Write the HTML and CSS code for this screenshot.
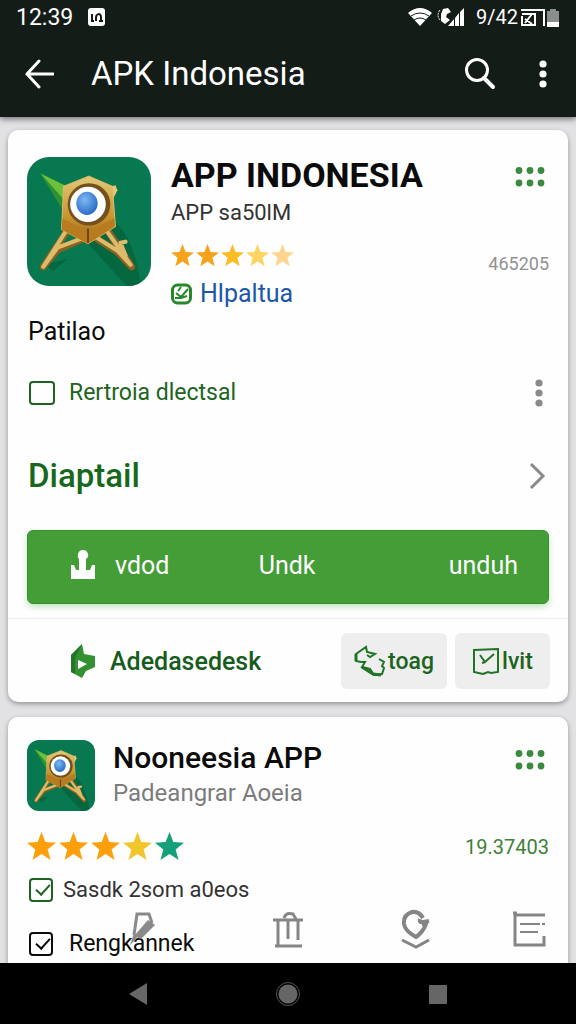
FILE: index.html
```html
<!DOCTYPE html>
<html lang="id">
<head>
<meta charset="utf-8">
<meta name="viewport" content="width=device-width, initial-scale=1">
<title>APK Indonesia</title>
<link rel="stylesheet" href="styles.css">
</head>

<body>
<!-- shared shapes -->
<svg class="defs" aria-hidden="true">
	<defs>
		<linearGradient id="gold" x1="0" y1="0" x2="0" y2="1">
			<stop offset="0" stop-color="#e3c878"/>
			<stop offset="0.6" stop-color="#c8952f"/>
			<stop offset="1" stop-color="#9a641a"/>
		</linearGradient>
		<radialGradient id="lens" cx="0.4" cy="0.35" r="0.7">
			<stop offset="0" stop-color="#7fb9f2"/>
			<stop offset="1" stop-color="#2467c4"/>
		</radialGradient>
	</defs>
	<symbol id="star" viewBox="0 0 24 24"><path d="M12 0l3.2 8.3 8.8.5-6.9 5.6 2.4 8.8L12 18.300l-7.500 4.900 2.400-8.800L0 8.800l8.800-.5z"/></symbol>
	<symbol id="dots" viewBox="0 0 30 20"><circle cx="4" cy="3.500" r="3.400"/><circle cx="15" cy="3.500" r="3.400"/><circle cx="26" cy="3.500" r="3.400"/><circle cx="4" cy="16" r="3.400"/><circle cx="15" cy="16" r="3.400"/><circle cx="26" cy="16" r="3.400"/></symbol>
	<symbol id="more" viewBox="0 0 8 28"><circle cx="4" cy="4" r="3.600"/><circle cx="4" cy="14" r="3.600"/><circle cx="4" cy="24" r="3.600"/></symbol>
	<symbol id="logo" viewBox="0 0 122 128" preserveAspectRatio="none">
		<rect width="122" height="128" fill="#07784f"/>
		<path d="M84 62q22 18 28 66H98L60 86z" fill="#04673f"/>
		<path d="M18 107l22-6-14 12z" fill="#04673f"/>
		<path d="M13 16l28 14-5 14z" fill="#6cc03c"/>
		<path d="M13 16l23 26v12z" fill="#2e9134"/>
		<path d="M39 74l-23 35 14-17 28-12M80 74l23 35-14-15-22-14" fill="none" stroke="#8c6220" stroke-width="7" stroke-linejoin="round"/>
		<path d="M38 74l-22 35 14-19 26-10M79 74l23 33-13-14-22-14M97 98l-5-13 5-1" fill="none" stroke="#dcbc6c" stroke-width="4" stroke-linejoin="round" stroke-linecap="round"/>
		<path d="M80 30l7-2 2 5-4 8" fill="#e3c878"/>
		<path d="M61 19l23 10 3 40-27 17-26-14 2-43z" fill="url(#gold)" stroke="#dcbc6c" stroke-width="1"/>
		<path d="M35 61l25 13 26-13v8L60 86 34 72z" fill="#b87b20"/>
		<path d="M60 71v14" stroke="#72470f" stroke-width="2"/>
		<circle cx="61" cy="47" r="21" fill="#74501d"/>
		<circle cx="60" cy="47" r="17.500" fill="#fff"/>
		<ellipse cx="59" cy="46" rx="10.500" ry="11.500" fill="url(#lens)"/>
	</symbol>
</svg>

<header class="top">
	<div class="status">
		<span class="clock">12:39</span>
		<svg width="19" height="20" viewBox="0 0 19 20"><rect x="1" y="1" width="17" height="18" rx="3" fill="#fff"/><path d="M5 7v7M9 14v-3c0-5 5-5 5-1v4M4 14h3M12 14h4" fill="none" stroke="#131c17" stroke-width="2"/></svg>
		<span class="fill"></span>
		<svg width="26" height="20" viewBox="0 0 26 20"><path d="M1 6Q13-4 25 6L13 19z" fill="#fff"/><path d="M4 9q9-6 18 0M7 13q6-4 12 0" fill="none" stroke="#131c17"/></svg>
		<svg width="30" height="20" viewBox="0 0 30 20"><path d="M7 2l5-1 3 4-4 2-1 3 4 3-5 4-4-3V7z" fill="#fff"/><path d="M4 3Q0 8 4 13" fill="none" stroke="#fff" stroke-dasharray="2 1"/><path d="M12 19l6-7v7zM19 19v-8l4-5v13zM24 19V5l4-4v18z" fill="#fff"/></svg>
		<span class="level">9/42</span>
		<svg width="40" height="21" viewBox="0 0 40 21"><path d="M1 3h23v16M2 7h13v11H2V9M5 16l7-9M5 12l7 5" fill="none" stroke="#fff" stroke-width="2"/><path d="M27 4h3V2h6v2h3v16H27z" fill="#8b8e8c"/><path d="M27 15h12v5H27z" fill="#fff"/></svg>
	</div>
	<div class="bar">
		<button class="icon" aria-label="Kembali"><svg width="30" height="30" viewBox="0 0 30 30" fill="none" stroke="#fff" stroke-width="3"><path d="M15 2L3 15l12 13M3 15h26" stroke-linecap="round"/></svg></button>
		<h1>APK Indonesia</h1>
		<button class="icon" aria-label="Cari"><svg width="32" height="32" viewBox="0 0 32 32" fill="none" stroke="#fff" stroke-width="3"><circle cx="13" cy="12" r="10.500"/><path d="M20 20l9 9" stroke-width="4" stroke-linecap="round"/></svg></button>
		<button class="icon" aria-label="Menu"><svg width="8" height="28" fill="#fff"><use href="#more"/></svg></button>
	</div>
</header>

<main>
	<section class="card">
		<div class="app">
			<svg class="logo"><use href="#logo"/></svg>
			<div class="info">
				<h2>APP INDONESIA</h2>
				<p class="sub">APP sa50lM</p>
				<div class="stars">
					<svg class="s1"><use href="#star"/></svg>
					<svg class="s1"><use href="#star"/></svg>
					<svg class="s2"><use href="#star"/></svg>
					<svg class="s3"><use href="#star"/></svg>
					<svg class="s4"><use href="#star"/></svg>
				</div>
				<a class="dev" href="#"><svg width="21" height="22" viewBox="0 0 21 22" fill="none" stroke="#28872c"><rect x="1.500" y="2" width="18" height="18" rx="5" stroke-width="3"/><path d="M5 10l5 4 7-8M4 15h6l6-2M10 4L7 8" stroke-width="2"/></svg>Hlpaltua</a>
			</div>
			<div class="side">
				<button class="icon" aria-label="Opsi"><svg class="dots"><use href="#dots"/></svg></button>
				<span class="count">465205</span>
			</div>
		</div>
		<p class="cat">Patilao</p>
		<div class="row">
			<label class="check green"><input type="checkbox">Rertroia dlectsal</label>
			<button class="icon" aria-label="Lainnya"><svg width="8" height="28" fill="#8a8a8a"><use href="#more"/></svg></button>
		</div>
		<a class="row detail" href="#">Diaptail<svg width="18" height="28" viewBox="0 0 18 28" fill="none" stroke="#8a8a8a" stroke-width="3"><path d="M3 2l12 12L3 26"/></svg></a>
		<button class="download">
			<span><svg width="24" height="30" viewBox="0 0 24 30" fill="#fff"><path d="M0 15l3 0 2 5h3V9Q6 7 7 4q1-4 5-4t5 4q1 3-2 5v11h4l2-5h3v14H0z"/></svg>vdod</span>
			<span>Undk</span>
			<span>unduh</span>
		</button>
		<div class="actions">
			<a class="share" href="#"><svg width="26" height="34" viewBox="0 0 26 34"><path d="M1 11L12 0l2 10 11 2v11l-9 4-4 7-11-6z" fill="#34912f"/><path d="M1 11v17l4 2V14l7-14z" fill="#24752a"/><path d="M8 16l9 4-9 5z" fill="#fff"/></svg>Adedasedesk</a>
			<button class="chip"><svg width="32" height="32" viewBox="0 0 32 32" fill="none" stroke="#1f7427" stroke-width="2"><path d="M7 17l-5-1V9l10-7 1 5 8 2-5 3-3-2M7 17h4l-3 5 8 2 4 6 8-1 2-6-2-2 2-4-5-3"/><path d="M2 16V9M8 22l11 7 8 1" stroke-width="3"/></svg>toag</button>
			<button class="chip"><svg width="28" height="27" viewBox="0 0 28 27" fill="none" stroke="#1f7427"><path d="M2 2l24-1v23l-7 1-3-1-5 2-9-2z" stroke-width="2"/><path d="M8 7l5 7 9-8M13 14l-3 1" stroke-width="2"/></svg>lvit</button>
		</div>
	</section>

	<section class="card second">
		<div class="app">
			<svg class="logo"><use href="#logo"/></svg>
			<div class="info">
				<h3>Nooneesia APP</h3>
				<p class="sub">Padeangrar Aoeia</p>
			</div>
			<button class="icon" aria-label="Opsi"><svg class="dots"><use href="#dots"/></svg></button>
		</div>
		<div class="row rate">
			<div class="stars big">
				<svg class="s5"><use href="#star"/></svg>
				<svg class="s5"><use href="#star"/></svg>
				<svg class="s5"><use href="#star"/></svg>
				<svg class="s6"><use href="#star"/></svg>
				<svg class="s7"><use href="#star"/></svg>
			</div>
			<span class="total">19.37403</span>
		</div>
		<label class="check green small"><input type="checkbox" checked><span>Sasdk 2som a0eos</span></label>
		<label class="check"><input type="checkbox" checked>Rengkannek</label>
	</section>

	<!-- floating tools over the list -->
	<div class="tools">
		<button class="icon" aria-label="Edit"><svg width="28" height="36" viewBox="0 0 28 36"><path d="M6 24L9 3h12l3 9" fill="none" stroke="#8a8a8a" stroke-width="3"/><path d="M20 9l7 5-14 14-7-3z" fill="#8a8a8a"/><path d="M6 22l-4 12 7-7z" fill="#8a8a8a"/></svg></button>
		<button class="icon" aria-label="Hapus"><svg width="30" height="38" viewBox="0 0 30 38" fill="none" stroke="#858585" stroke-width="3"><path d="M0 10h30M5 10v25M25 10v20M15 9v20M2 36h27M11 8q2-6 9-4l3 5"/></svg></button>
		<button class="icon" aria-label="Lokasi"><svg width="30" height="40" viewBox="0 0 30 40" fill="none" stroke="#858585" stroke-width="4"><path d="M22 9Q18 2 11 3 2 6 3 15q1 7 12 13 7-5 10-13h-4M19 10q-1 4 3 3l6-1" stroke-linejoin="round"/><path d="M1 31l14 7 13-7" stroke-width="3"/></svg></button>
		<button class="icon" aria-label="Daftar"><svg width="34" height="36" viewBox="0 0 34 36" fill="none" stroke="#858585" stroke-width="3"><path d="M33 4H3v30h29v-9M1 2h4"/><path d="M8 13h20M30 13h3M8 21h18" stroke-width="2"/></svg></button>
	</div>
</main>

<nav>
	<button class="icon" aria-label="Back"><svg width="20" height="24" viewBox="0 0 20 24"><path d="M19 1v22L1 12z" fill="#666"/></svg></button>
	<button class="icon" aria-label="Home"><svg width="26" height="26" viewBox="0 0 26 26"><circle cx="13" cy="13" r="11.500" fill="none" stroke="#555" stroke-width="1"/><circle cx="13" cy="13" r="9.500" fill="#666"/></svg></button>
	<button class="icon" aria-label="Recent"><svg width="20" height="20" viewBox="0 0 20 20"><rect x="1" y="1" width="18" height="19" rx="1" fill="#666"/></svg></button>
</nav>
</body>
</html>
```
FILE: styles.css
```css
* {margin:0; padding:0; box-sizing:border-box;}
body {height:100vh; display:flex; flex-direction:column; overflow:hidden; background:#e2e2e4; font-family:Roboto, "Liberation Sans", sans-serif; color:#0b0b0b;}
a {text-decoration:none; color:inherit;}
button {font-family:inherit; border:0; background:none; cursor:pointer;}
svg {display:block; flex:none;}
.defs {position:absolute; width:0; height:0;}
.icon {display:flex; align-items:center; justify-content:center;}

.top {position:relative; z-index:1; background:#131c17; color:#fff; box-shadow:0 2px 6px rgba(0,0,0,0.5);}
.status {height:34px; padding:0 16px; display:flex; align-items:center;}
.clock {font-size:23px; margin-right:14px;}
.fill {flex:1;}
.level {font-size:20px; margin:0 2px 0 10px;}
.status svg + svg {margin-left:3px;}
.bar {height:83px; padding:0 29px 4px 24px; display:flex; align-items:center;}
.bar h1 {flex:1; margin-left:37px; font-size:33px; font-weight:400;}
.bar .icon + .icon {margin-left:43px;}

main {flex:1; min-height:0; position:relative; overflow:hidden; padding:13px 8px 0;}
.card {background:#fefefe; border-radius:10px; padding:27px 19px 13px; box-shadow:0 2px 5px rgba(0,0,0,0.35);}
.app {display:flex; align-items:flex-start;}
.logo {width:124px; height:129px; border-radius:22px;}
.info {flex:1; margin-left:20px;}
h2 {font-size:34px; line-height:36px; font-weight:700;}
.sub {font-size:22px; line-height:28px; margin-top:6px; color:#333;}
.stars {display:flex; gap:2px; margin-top:17px;}
.stars svg {width:23px; height:23px;}
.s1 {fill:#f5a31a;}
.s2 {fill:#fbbc25;}
.s3 {fill:#fdd462;}
.s4 {fill:#fcd68e;}
.s5 {fill:#ff9f0a;}
.s6 {fill:#f1c62d;}
.s7 {fill:#14a078;}
.dev {display:flex; align-items:center; gap:8px; margin-top:12px; font-size:25px; line-height:30px; color:#1c58a8;}
.side {display:flex; flex-direction:column; align-items:flex-end;}
.dots {width:30px; height:20px; fill:#3b8a3e;}
.side .icon, .second .app .icon {margin:10px 4px 0 0;}
.count {margin-top:65px; font-size:18px; line-height:24px; color:#929292;}
.cat {font-size:25px; line-height:32px; margin-top:7px; padding-left:1px;}

.row {display:flex; align-items:center; justify-content:space-between; padding:0 6px 0 1px;}
.cat + .row {margin-top:29px;}
.check {display:flex; align-items:center; font-size:23px; line-height:32px;}
.check input {appearance:none; position:relative; width:26px; height:24px; margin:0 14px 0 1px; border:2px solid; border-radius:4px; color:inherit;}
.check input:checked::after {content:""; position:absolute; left:8px; top:1px; width:6px; height:12px; border:solid; border-width:0 2px 2px 0; transform:rotate(42deg);}
.green {color:#1c6420;}
.detail {margin-top:47px; font-size:33px; line-height:40px; font-weight:500; color:#17681d; padding-right:3px;}
.download {width:100%; height:74px; margin-top:34px; padding:0 30px 4px 43px; display:grid; grid-template-columns:42% 1fr auto; align-items:center; text-align:left; border-radius:6px; background:#449d37; border:1px solid #3a8d30; box-shadow:0 3px 6px rgba(80,180,80,0.35); color:#fff; font-size:25px;}
.download span {display:flex; align-items:center; gap:20px;}
.actions {display:flex; align-items:center; gap:8px; margin:14px -19px 0; padding:14px 18px 0; border-top:1px solid #eee;}
.share {flex:1; display:flex; align-items:center; gap:14px; padding-left:44px; font-size:25px; font-weight:500; color:#175c1d;}
.chip {height:56px; width:106px; display:flex; align-items:center; justify-content:center; gap:2px; border-radius:6px; background:#eee; color:#1c6420; font-size:23px; font-weight:500;}
.chip + .chip {width:95px;}

.second {margin-top:15px; padding-top:23px;}
.second .logo {width:68px; height:71px; border-radius:12px;}
.second .info {margin-left:18px;}
h3 {font-size:30px; line-height:36px; font-weight:500;}
.second .sub {margin-top:3px; font-size:24px; color:#7c7c7c;}
.rate {margin-top:20px; padding:0;}
.stars.big {margin:0; gap:3px;}
.stars.big svg {width:29px; height:31px;}
.total {font-size:20px; color:#3f8038;}
.second .check {margin-top:22px; padding-left:1px; font-size:23px;}
.second .check.small {margin-top:12px; font-size:22px;}
.second .check input {width:24px; margin-right:16px;}
.second .small input {margin-right:10px;}
.small span {color:#333;}

.tools {position:absolute; left:0; right:0; bottom:14px; padding:0 30px 0 128px; display:grid; grid-template-columns:26fr 23fr 20fr 6fr; align-items:center; justify-items:start; pointer-events:none;}
nav {height:61px; background:#000; display:flex; align-items:center; justify-content:center; gap:127px;}
```
